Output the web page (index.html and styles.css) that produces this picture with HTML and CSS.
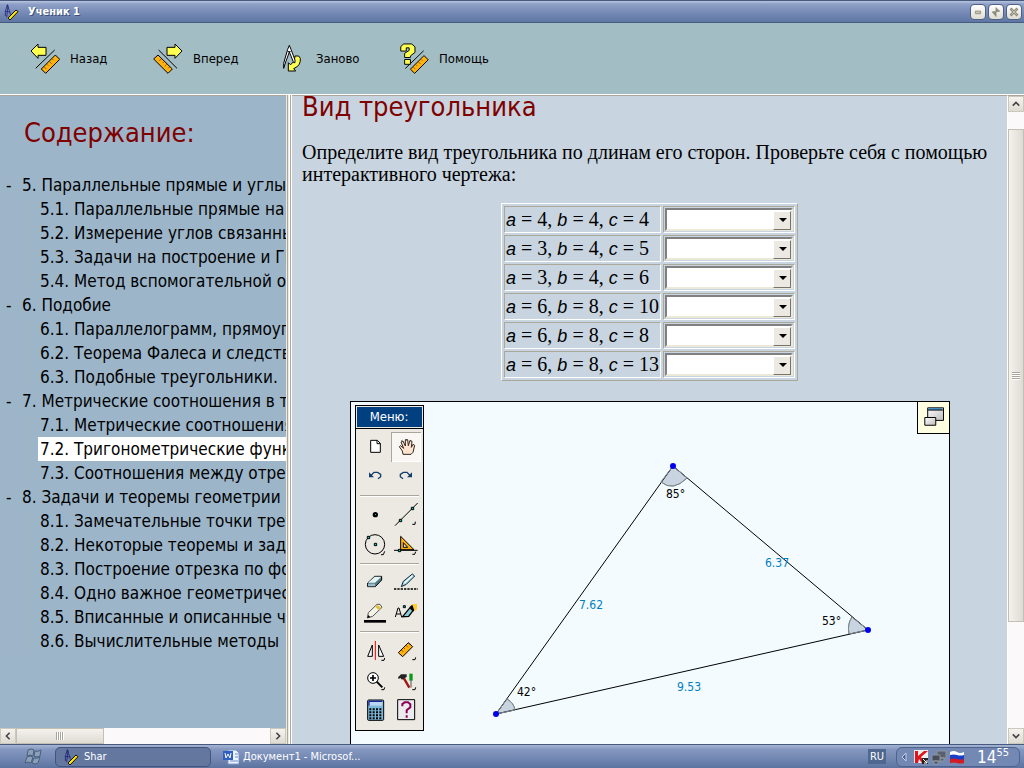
FILE: index.html
```html
<!DOCTYPE html>
<html lang="ru">
<head>
<meta charset="utf-8">
<title>Ученик 1</title>
<link rel="stylesheet" href="styles.css">
</head>
<body>
<header class="titlebar">
  <svg class="app-icon" viewBox="12 8 48 48" aria-hidden="true"><path d="M16 44v-14l6-20 10 30M20 48l4-36M16 30l14 2" fill="none" stroke="#101070" stroke-width="2"/><path d="M24 50l24-24 6 5-24 25z" fill="#ffe600" stroke="#111" stroke-width="3"/></svg>
  <h1 class="title">Ученик 1</h1>
  <button class="win-btn" aria-label="Свернуть"><svg viewBox="0 0 16 16"><path d="M5 7h6v3H5z" fill="#c8c5b8" stroke="#8d8a7a"/></svg></button>
  <button class="win-btn" aria-label="Восстановить"><svg viewBox="0 0 16 16"><path d="M8 3l4 4H8zM8 13L4 8h4zM4 8h4v-1h4" fill="#8d8a7a" stroke="#8d8a7a"/></svg></button>
  <button class="win-btn" aria-label="Закрыть"><svg viewBox="0 0 16 16"><path d="M4 4l8 8M12 4l-8 8" stroke="#8d8a7a" stroke-width="3"/><path d="M5 5l6 6M11 5l-6 6" stroke="#d0cdc0"/></svg></button>
</header>

<nav class="toolbar" aria-label="Навигация">
  <button class="tool-link"><svg class="tool-icon" viewBox="91 130 90 93"><path d="M94 154l21-21v10h24v24h-24v9z" class="y"/><path d="M108 206l57-55" class="l"/><path d="M125 208l42-42 13 13-42 42z" class="r"/><path d="M134 202l6 6M142 194l4 4M150 186l6 6M158 178l4 4" class="t"/></svg>Назад</button>
  <button class="tool-link"><svg class="tool-icon" viewBox="455 130 90 93"><path d="M542 154l-21-21v10h-24v24h24v9z" class="y"/><path d="M472 151l55 55" class="l"/><path d="M457 178l13-12 43 42-13 13z" class="r"/><path d="M480 178l-6 6M488 186l-4 4M496 194l-6 6M504 202l-4 4" class="t"/></svg>Вперед</button>
  <button class="tool-link"><svg class="tool-icon" viewBox="831 127 90 93"><path d="M868 211v-25l6 6q13-7 14-26h11l5 7q2 22-20 31l6 7z" class="y"/><path d="M854 203v-15l12-42 5-12 5 12 12 32v8h-4l-13-32-12 33z" fill="#fff" stroke="#000" stroke-width="3"/><path d="M866 153h9" class="l"/></svg>Заново</button>
  <button class="tool-link"><svg class="tool-icon" viewBox="327 127 90 96"><path d="M345 206l57-55" class="l"/><path d="M361 208l42-42 13 13-42 42z" class="r"/><path d="M370 202l6 6M378 194l4 4M386 186l6 6M394 178l4 4" class="t"/><path d="M331 152v-14l9-8h25l10 9v17l-14 11v5h-18v-13l14-9v-8h-9v10zM343 178h18v15h-18z" class="y"/></svg>Помощь</button>
</nav>

<div class="frames">
  <aside class="sidebar">
    <div class="contents">
      <h2 class="contents-title">Содержание:</h2>
      <ul class="tree">
        <li><span class="node">5. Параллельные прямые и углы</span>
          <ul class="branch">
            <li>5.1. Параллельные прямые на плоскости</li>
            <li>5.2. Измерение углов связанных с окружностью</li>
            <li>5.3. Задачи на построение и ГМТ</li>
            <li>5.4. Метод вспомогательной окружности</li>
          </ul></li>
        <li><span class="node">6. Подобие</span>
          <ul class="branch">
            <li>6.1. Параллелограмм, прямоугольник</li>
            <li>6.2. Теорема Фалеса и следствия</li>
            <li>6.3. Подобные треугольники.</li>
          </ul></li>
        <li><span class="node">7. Метрические соотношения в треугольнике</span>
          <ul class="branch">
            <li>7.1. Метрические соотношения</li>
            <li class="current">7.2. Тригонометрические функции</li>
            <li>7.3. Соотношения между отрезками</li>
          </ul></li>
        <li><span class="node">8. Задачи и теоремы геометрии</span>
          <ul class="branch">
            <li>8.1. Замечательные точки треугольника</li>
            <li>8.2. Некоторые теоремы и задачи</li>
            <li>8.3. Построение отрезка по формуле</li>
            <li>8.4. Одно важное геометрическое место</li>
            <li>8.5. Вписанные и описанные четырехугольники</li>
            <li>8.6. Вычислительные методы</li>
          </ul></li>
      </ul>
    </div>
    <div class="scroll scroll-h">
      <button class="scroll-btn" aria-label="Влево"><svg viewBox="0 0 10 10"><path d="M7 1L3 5l4 4"/></svg></button>
      <div class="thumb thumb-h"></div>
      <div class="track"></div>
      <button class="scroll-btn" aria-label="Вправо"><svg viewBox="0 0 10 10"><path d="M3 1l4 4-4 4"/></svg></button>
    </div>
  </aside>
  <div class="splitter"></div>

  <main class="page">
    <h2 class="page-title">Вид треугольника</h2>
    <p class="statement">Определите вид треугольника по длинам его сторон. Проверьте себя с помощью интерактивного чертежа:</p>
    <table class="quiz">
      <tr><td><label for="q1"><i>a</i> = 4, <i>b</i> = 4, <i>c</i> = 4</label></td><td><span class="combo"><select id="q1"><option></option></select></span></td></tr>
      <tr><td><label for="q2"><i>a</i> = 3, <i>b</i> = 4, <i>c</i> = 5</label></td><td><span class="combo"><select id="q2"><option></option></select></span></td></tr>
      <tr><td><label for="q3"><i>a</i> = 3, <i>b</i> = 4, <i>c</i> = 6</label></td><td><span class="combo"><select id="q3"><option></option></select></span></td></tr>
      <tr><td><label for="q4"><i>a</i> = 6, <i>b</i> = 8, <i>c</i> = 10</label></td><td><span class="combo"><select id="q4"><option></option></select></span></td></tr>
      <tr><td><label for="q5"><i>a</i> = 6, <i>b</i> = 8, <i>c</i> = 8</label></td><td><span class="combo"><select id="q5"><option></option></select></span></td></tr>
      <tr><td><label for="q6"><i>a</i> = 6, <i>b</i> = 8, <i>c</i> = 13</label></td><td><span class="combo"><select id="q6"><option></option></select></span></td></tr>
    </table>

    <section class="sketch" aria-label="Чертеж">
      <svg class="drawing" width="598" height="400" viewBox="1 1 598 400">
        <g class="angles">
          <path d="M323 65L311 81Q323 91 337 77Z"/>
          <path d="M518 229L502 216Q497 223 499 233Z"/>
          <path d="M146 313L157 298Q164 302 165 309Z"/>
        </g>
        <path class="sides" d="M323 65L518 229L146 313Z"/>
        <g class="angles over">
          <path d="M323 65L311 81Q323 91 337 77Z"/>
          <path d="M518 229L502 216Q497 223 499 233Z"/>
          <path d="M146 313L157 298Q164 302 165 309Z"/>
        </g>
        <g fill="#0000f0"><circle cx="323" cy="65" r="3"/><circle cx="518" cy="229" r="3"/><circle cx="146" cy="313" r="3"/></g>
        <text x="316" y="97">85°</text><text x="472" y="224">53°</text><text x="167" y="295">42°</text>
        <g class="len"><text x="415" y="166">6.37</text><text x="229" y="208">7.62</text><text x="327" y="290">9.53</text></g>
      </svg>

      <div class="palette">
        <div class="palette-title">Меню:</div>
        <div class="tools">
          <button class="tool" aria-label="Новый"><svg viewBox="30 96 90 90"><path d="M62 121h20l9 9v27H62z" fill="#fff" stroke="#000" stroke-width="3"/><path d="M81 121v10h10" class="l"/></svg></button>
          <button class="tool pressed" aria-label="Двигать"><svg viewBox="123 96 90 90"><path d="M159 163l-2-10-9-13 4-3 9 8-8-19 6-3 7 15 0-19h7l2 18 5-16 6 3-2 18 5-9 5 3-5 21-6 6z" fill="#ffe4cf" stroke="#33251c" stroke-width="3"/><path d="M153 124l4-3M166 120h6M180 122l4 2" stroke="#555" stroke-width="3"/></svg></button>
          <button class="tool" aria-label="Отменить"><svg viewBox="30 186 90 90"><path d="M57 217v15h15z" fill="#123f6b"/><path d="M62 227l10-10h11l9 6v7l-8 6" class="n"/></svg></button>
          <button class="tool" aria-label="Повторить"><svg viewBox="123 186 90 90"><path d="M186 217v15h-15z" fill="#123f6b"/><path d="M181 227l-10-10h-11l-9 6v7l8 6" class="n"/></svg></button>
        </div>
        <hr>
        <div class="tools">
          <button class="tool" aria-label="Точка"><svg viewBox="30 300 90 90"><circle cx="76" cy="344" r="8"/><path d="M75 342h3v3h-3z" fill="#0cc"/></svg></button>
          <button class="tool" aria-label="Прямая"><svg viewBox="123 300 90 90"><path d="M135 377l68-68" class="l"/><path d="M148 358h7v7h-7zM184 322h7v7h-7z" class="c"/><path d="M187 373h8l1-8" class="l"/></svg></button>
          <button class="tool" aria-label="Окружность"><svg viewBox="30 390 90 90"><circle cx="75" cy="433" r="29" class="l"/><path d="M73 430h7v7h-7zM52 409h7v7h-7z" class="c"/><path d="M93 464h7l4-10" class="l"/></svg></button>
          <button class="tool" aria-label="Построения"><svg viewBox="123 390 90 90"><path d="M132 451h71" class="l"/><path d="M152 409v40h40zM160 428v14h13z" fill="#ffb20d" fill-rule="evenodd" stroke="#000" stroke-width="3"/><path d="M145 448h7v7h-7z" class="c"/><path d="M187 463h7l3-8" class="l"/></svg></button>
        </div>
        <hr>
        <div class="tools">
          <button class="tool" aria-label="Ластик"><svg viewBox="30 24 90 90"><path d="M53 69l21-20h21v11L76 80H53z" fill="#577b86" stroke="#000" stroke-width="3"/><path d="M54 68l20-18h20L75 68z" fill="#e4f5f7"/><path d="M54 71h21v8H54z" fill="#9bc"/></svg></button>
          <button class="tool" aria-label="Стиль линии"><svg viewBox="123 24 90 90"><path d="M154 80l6-16 27-22 7 6-25 25z" fill="#9bdcec" stroke="#123" stroke-width="3"/><path d="M163 70l24-23" stroke="#fff" stroke-width="4"/><path d="M132 87h72" stroke="#000" stroke-width="5" stroke-dasharray="7 3"/></svg></button>
          <button class="tool" aria-label="Цвет"><svg viewBox="30 114 90 90"><path d="M52 174l3-16 26-25h9l6 9-28 27z" fill="#f3f3e8" stroke="#555" stroke-width="3"/><path d="M76 141l6-7 11 9-6 8z" fill="#e2c13a"/><path d="M52 174l3-9 6 6z"/><path d="M42 180h66v8H42z"/></svg></button>
          <button class="tool" aria-label="Имена"><svg viewBox="123 114 90 90"><path d="M136 171l8-27h3l8 27M139 162h13" class="l"/><path d="M160 137h6v6h-6z" class="c"/><path d="M158 170l22-27 9 9-13 17z" fill="#8acbd8" stroke="#000" stroke-width="4"/><path d="M179 140l11-8 9 4-8 19z"/><path d="M186 132h15v16l-7 6z" fill="#fc3"/></svg></button>
        </div>
        <hr>
        <div class="tools">
          <button class="tool" aria-label="Симметрия"><svg viewBox="30 228 90 90"><path d="M53 289h14v-34zM101 289H86v-34z" fill="#fff" stroke="#000" stroke-width="3"/><path d="M76 243v57" stroke="#e00" stroke-width="3"/><path d="M94 301h8l2-7" class="l"/></svg></button>
          <button class="tool" aria-label="Измерения"><svg viewBox="123 228 90 90"><path d="M145 278l30-30 13 12-30 30z" class="r"/><path d="M154 270l6 6M161 263l4 4M168 256l6 6M175 250l4 4" class="t"/><path d="M187 299h8l2-7" class="l"/></svg></button>
          <button class="tool" aria-label="Масштаб"><svg viewBox="30 318 90 90"><circle cx="69" cy="354" r="16" fill="#fff" stroke="#000" stroke-width="3"/><path d="M69 345v18M60 354h18" stroke="#000" stroke-width="5"/><path d="M80 365l17 17" stroke="#000" stroke-width="6"/><path d="M94 389h8l2-7" class="l"/></svg></button>
          <button class="tool" aria-label="Настройки"><svg viewBox="123 318 90 90"><path d="M160 352l18 31" stroke="#a01515" stroke-width="7"/><path d="M144 352l9-9h17v8l-14 8-5-5-5 3z" fill="#222"/><path d="M183 341v21" stroke="#0a9a1a" stroke-width="10"/><path d="M183 361v22" stroke="#555" stroke-width="3"/><path d="M187 389h8l2-7" class="l"/></svg></button>
          <button class="tool" aria-label="Калькулятор"><svg viewBox="30 408 90 90"><rect x="53" y="420" width="48" height="61" rx="3" fill="#7db8da" stroke="#000" stroke-width="3"/><path d="M57 424h40v13H57z" fill="#b9d5ef"/><path d="M57 437v-13h40" fill="none" stroke="#008" stroke-width="3"/><path d="M58 448h39M58 457h39M58 466h39M58 475h39" stroke="#000" stroke-width="6" stroke-dasharray="6 4"/></svg></button>
          <button class="tool" aria-label="Справка"><svg viewBox="123 408 90 90"><path d="M143 419h51v60h-51z" fill="#ececf0" stroke="#000" stroke-width="3"/><path d="M157 439v-7l7-5h10l7 6v9l-11 9v9M170 466v7" fill="none" stroke="#8c0055" stroke-width="6"/></svg></button>
        </div>
      </div>

      <button class="expand" aria-label="Развернуть"><svg viewBox="832 4 96 96"><defs><linearGradient id="g" x2="1" y2="1"><stop stop-color="#fff"/><stop offset="1" stop-color="#bbb"/></linearGradient></defs><path d="M862 22h49v39h-49z" fill="url(#g)" stroke="#000" stroke-width="3"/><path d="M864 26h42" stroke="#0078d0" stroke-width="4"/><path d="M862 29h49" stroke="#000" stroke-width="3"/><path d="M853 52h34v24h-34z" fill="url(#g)" stroke="#000" stroke-width="3"/></svg></button>
    </section>
  </main>

  <div class="scroll scroll-v">
    <button class="scroll-btn" aria-label="Вверх"><svg viewBox="0 0 10 10"><path d="M1 7l4-4 4 4"/></svg></button>
    <div class="track lead"></div>
    <div class="thumb thumb-v"></div>
    <div class="track"></div>
    <button class="scroll-btn" aria-label="Вниз"><svg viewBox="0 0 10 10"><path d="M1 3l4 4 4-4"/></svg></button>
  </div>
</div>

<footer class="taskbar">
  <button class="start" aria-label="Пуск"><svg viewBox="0 0 18 18"><path d="M4 2q3-2 6 0l-1 6q-3-2-6 0zM11 3q3 1 6-1l-1 6q-3 2-6 0zM3 9q3-2 6 0l-2 6q-3-2-6 0zM10 10q3 1 6-1l-2 6q-3 2-6 0z" fill="#8ba0b8" stroke="#4a607e"/></svg></button>
  <button class="task active"><svg viewBox="12 8 48 48"><path d="M16 44v-14l6-20 10 30M20 48l4-36M16 30l14 2" fill="none" stroke="#101070" stroke-width="2"/><path d="M24 50l24-24 6 5-24 25z" fill="#ffe600" stroke="#111" stroke-width="3"/></svg>Shar</button>
  <button class="task"><svg viewBox="0 0 16 16"><path d="M5 1h8l3 3v11H5z" fill="#eef4ff" stroke="#7d99cc"/><path d="M12 5h3M12 8h3M7 12h8" stroke="#6a8ad0"/><path d="M0 2h10v9H0z" fill="#2f5fc0"/><path d="M2 4l1 5 2-4 2 4 1-5" fill="none" stroke="#fff"/></svg>Документ1 - Microsof...</button>
  <span class="lang">RU</span>
  <div class="tray">
    <svg class="chev" viewBox="0 0 8 12"><path d="M6 2L2 6l4 4z" fill="#4d6391" stroke="#c4d0e6"/></svg>
    <svg viewBox="0 0 16 16"><path d="M1 1h14v13H1z" fill="#eee"/><path d="M2 2h3v5l6-5h4L8 8l4 6H9L6 10l-1 4H2z" fill="#e0141c"/><path d="M9 9h6v6H9z" fill="#222"/><path d="M10 10l4 4m0-3v3h-3" stroke="#fff" fill="none"/></svg>
    <svg viewBox="0 0 16 16"><path d="M6 2h9v7H6zM9 9h4v3H9z" fill="#59616c" stroke="#8e969e"/><path d="M1 6h8v6H1zM3 12h4v3H3z" fill="#474e59" stroke="#8e969e"/></svg>
    <svg viewBox="0 0 16 16"><path d="M1 3q4-2 7 0t7 0v4H1z" fill="#fff"/><path d="M1 6q4-1 7 0t7 0v5H1z" fill="#1b3fc4"/><path d="M1 10q4-1 7 0t7 0v4q-4 1-7 0t-7 0z" fill="#d61a22"/></svg>
    <time class="clock">14<sup>55</sup></time>
  </div>
</footer>
</body>
</html>
```

FILE: styles.css
```css
:root {
  --ui: "DejaVu Sans Condensed", "Noto Sans", sans-serif;
  --line: #aca899;
}
* { box-sizing: border-box; }
body {
  margin: 0;
  height: 100vh;
  display: flex;
  flex-direction: column;
  overflow: hidden;
  font-family: var(--ui);
  color: #000;
}
button { font: inherit; color: inherit; border: 0; background: none; padding: 0; }
svg { display: block; flex: none; }

.titlebar {
  flex: none;
  height: 23px;
  display: flex;
  align-items: center;
  gap: 2px;
  padding: 0 2px 0 4px;
  border-top: 1px solid #46597f;
  border-bottom: 1px solid #46597f;
  background: linear-gradient(#b9c5df, #8d9fc6 15%, #7388b3 60%, #5f77a4);
  color: #fff;
}
.app-icon { width: 16px; height: 16px; }
.title { flex: 1; margin: 0 0 0 6px; font-size: 11px; font-weight: bold; text-shadow: 1px 1px #3c4f78; }
.win-btn {
  width: 16px;
  height: 16px;
  border: 1px solid #4f6189;
  border-radius: 4px;
  background: linear-gradient(#fff, #dedbd0);
}
.win-btn svg { width: 14px; height: 14px; }

.toolbar {
  flex: none;
  height: 71px;
  display: flex;
  align-items: center;
  padding-left: 30px;
  background: #a3bdc4;
}
.tool-link { display: flex; align-items: center; gap: 10px; min-width: 123px; font-size: 13px; }
.tool-icon { width: 30px; height: 31px; }
.y { fill: #ffff50; stroke: #000; stroke-width: 3; }
.r { fill: #ffb20d; stroke: #000; stroke-width: 3; }
.l { fill: none; stroke: #000; stroke-width: 3; }
.t { fill: none; stroke: #5c3500; stroke-width: 2; }
.n { fill: none; stroke: #123f6b; stroke-width: 4; }
.c { fill: #00d0b8; stroke: #000; stroke-width: 3; }

.frames {
  flex: 1;
  min-height: 0;
  display: flex;
  border-top: 1px solid #fff;
  background: #c8d5e0;
}
.sidebar {
  flex: none;
  width: 286px;
  display: flex;
  flex-direction: column;
  background: #9cb5c9;
  border-top: 1px solid var(--line);
}
.splitter {
  flex: none;
  width: 6px;
  background: linear-gradient(90deg, #ece9e2 0 1px, var(--line) 1px 2px, #ece9e2 2px 3px, #fff 3px 4px, var(--line) 4px 5px, #fff 5px);
}
.contents { flex: 1; min-height: 0; overflow: hidden; }
.contents-title { margin: 22px 0 25px 24px; font-size: 27px; line-height: 30px; font-weight: normal; color: #800000; }
.tree, .branch { list-style: none; margin: 0; padding: 0; white-space: nowrap; font-size: 17px; line-height: 24px; }
.tree { margin-left: 9px; border-left: 1px dotted #a9b2b4; }
.node { display: flex; gap: 4px; }
.node::before { content: "-"; flex: none; width: 12px; margin-left: -4px; }
.branch { margin-left: 18px; border-left: 1px dotted #a9b2b4; padding-left: 9px; }
.branch li { padding-left: 2px; }
.current { background: #fff; }

.scroll { flex: none; display: flex; background: #fbf9fa; }
.scroll-h { height: 16px; }
.scroll-v { width: 17px; flex-direction: column; border: 1px solid #fff; border-width: 1px 0 0 1px; border-top-color: var(--line); }
.scroll-btn { flex: none; width: 16px; height: 16px; padding: 3px; border: 1px solid #cbc8bd; background: linear-gradient(#f5f3ef, #dedbd3); }
.scroll-btn path { fill: none; stroke: #444; stroke-width: 2; }
.track { flex: 1; }
.lead { flex: 0 0 17px; }
.thumb { display: grid; place-items: center; border: 1px solid #c3bfb5; background: linear-gradient(90deg, #f5f2ee, #dedad3); }
.thumb::after { content: ""; width: 8px; height: 8px; background: repeating-linear-gradient(90deg, #aaa69b 0 1px, #fff 1px 2px); }
.thumb-h { width: 88px; background: linear-gradient(#f5f2ee, #dedad3); }
.thumb-v { flex: 0 0 493px; }
.thumb-v::after { background: repeating-linear-gradient(#aaa69b 0 1px, #fff 1px 2px); }

.page { flex: 1; min-width: 0; overflow: hidden; padding: 0 10px; border-top: 1px solid var(--line); }
.page-title { margin: 0 0 24px; font-size: 27px; line-height: 21px; font-weight: normal; color: #800000; }
.statement { margin: 0 0 18px; font: 20px/22px "Liberation Serif", serif; }
.quiz {
  margin: 0 auto 20px;
  border: 1px solid;
  border-color: #fff var(--line) var(--line) #fff;
  border-spacing: 2px;
  font: 20px/22px "Liberation Serif", serif;
}
.quiz td { height: 27px; padding: 1px; border: 1px solid; border-color: var(--line) #fff #fff var(--line); white-space: nowrap; }
.quiz i { font-family: "Liberation Sans", sans-serif; font-size: 18px; }
.combo { display: grid; position: relative; }
.combo select {
  appearance: none;
  width: 128px;
  height: 23px;
  border: 2px solid;
  border-color: #808080 #ece9d8 #ece9d8 #808080;
  border-radius: 0;
  background: #fff;
}
.combo::before, .combo::after { content: ""; position: absolute; pointer-events: none; }
.combo::after {
  top: 3px;
  right: 2px;
  width: 16px;
  height: 17px;
  border: 1px solid;
  border-color: #fff #77746b #77746b #fff;
  background: #ece9e2;
}
.combo::before {
  z-index: 1;
  top: 10px;
  right: 6px;
  border: 4px solid transparent;
  border-top-color: #000;
  border-bottom: 0;
}

.sketch { position: relative; max-width: 600px; margin: 0 auto; border: 1px solid #000; background: #f3fbff; overflow: hidden; }
.drawing { font: 12px var(--ui); }
.sides { fill: none; stroke: #000; }
.angles { fill: #c8d5e0; stroke: #808890; }
.over { fill: none; }
.len { fill: #0080c0; }
.palette { position: absolute; left: 4px; top: 3px; width: 69px; padding-bottom: 4px; border: 1px solid #000; background: #ece9e2; }
.palette-title { margin: 1px; height: 20px; background: #004080; color: #fff; font-size: 13px; line-height: 20px; text-align: center; }
.tools { display: grid; grid-template-columns: 30px 30px; justify-content: end; column-gap: 1px; padding-right: 2px; }
.palette-title + .tools { border-top: 1px solid #000; padding-top: 3px; }
.tool svg { width: 30px; height: 30px; }
.pressed { background: #f8f7f4; box-shadow: inset 1px 1px #aaa69b, inset -1px -1px #fff; }
.palette hr { height: 2px; margin: 3px 4px; border: 0; border-top: 1px solid #aaa69b; background: #fff; }
.expand { position: absolute; top: 0; right: 0; width: 32px; height: 32px; border: solid #000; border-width: 0 0 1px 1px; background: #ffffe1; }
.expand svg { width: 31px; height: 31px; }

.taskbar {
  flex: none;
  height: 24px;
  display: flex;
  align-items: center;
  gap: 10px;
  padding: 0 4px 0 24px;
  border-top: 1px solid #46597f;
  background: linear-gradient(#a5b4d2, #8497bf 20%, #6d83ae 70%, #5c739f);
  color: #fff;
  font-size: 11px;
}
.start svg { width: 18px; height: 18px; }
.start { width: 21px; }
.task { display: flex; align-items: center; gap: 4px; height: 20px; padding: 0 2px; white-space: nowrap; }
.task svg, .tray svg { width: 16px; height: 16px; }
.active { width: 156px; padding-left: 8px; border: 1px solid #43557c; border-radius: 5px; background: #63779f; }
.lang { margin-left: auto; padding: 1px 2px; background: #4f688f; }
.tray { display: flex; align-items: center; gap: 2px; height: 20px; width: 124px; padding-left: 3px; border: 1px solid #4f638d; border-radius: 6px; background: #7388b3; }
.tray .chev { width: 8px; height: 12px; margin-right: 3px; }
.clock { flex: 1; text-align: center; font-size: 17px; white-space: nowrap; }
.clock sup { font-size: 11px; line-height: 0; }
```
